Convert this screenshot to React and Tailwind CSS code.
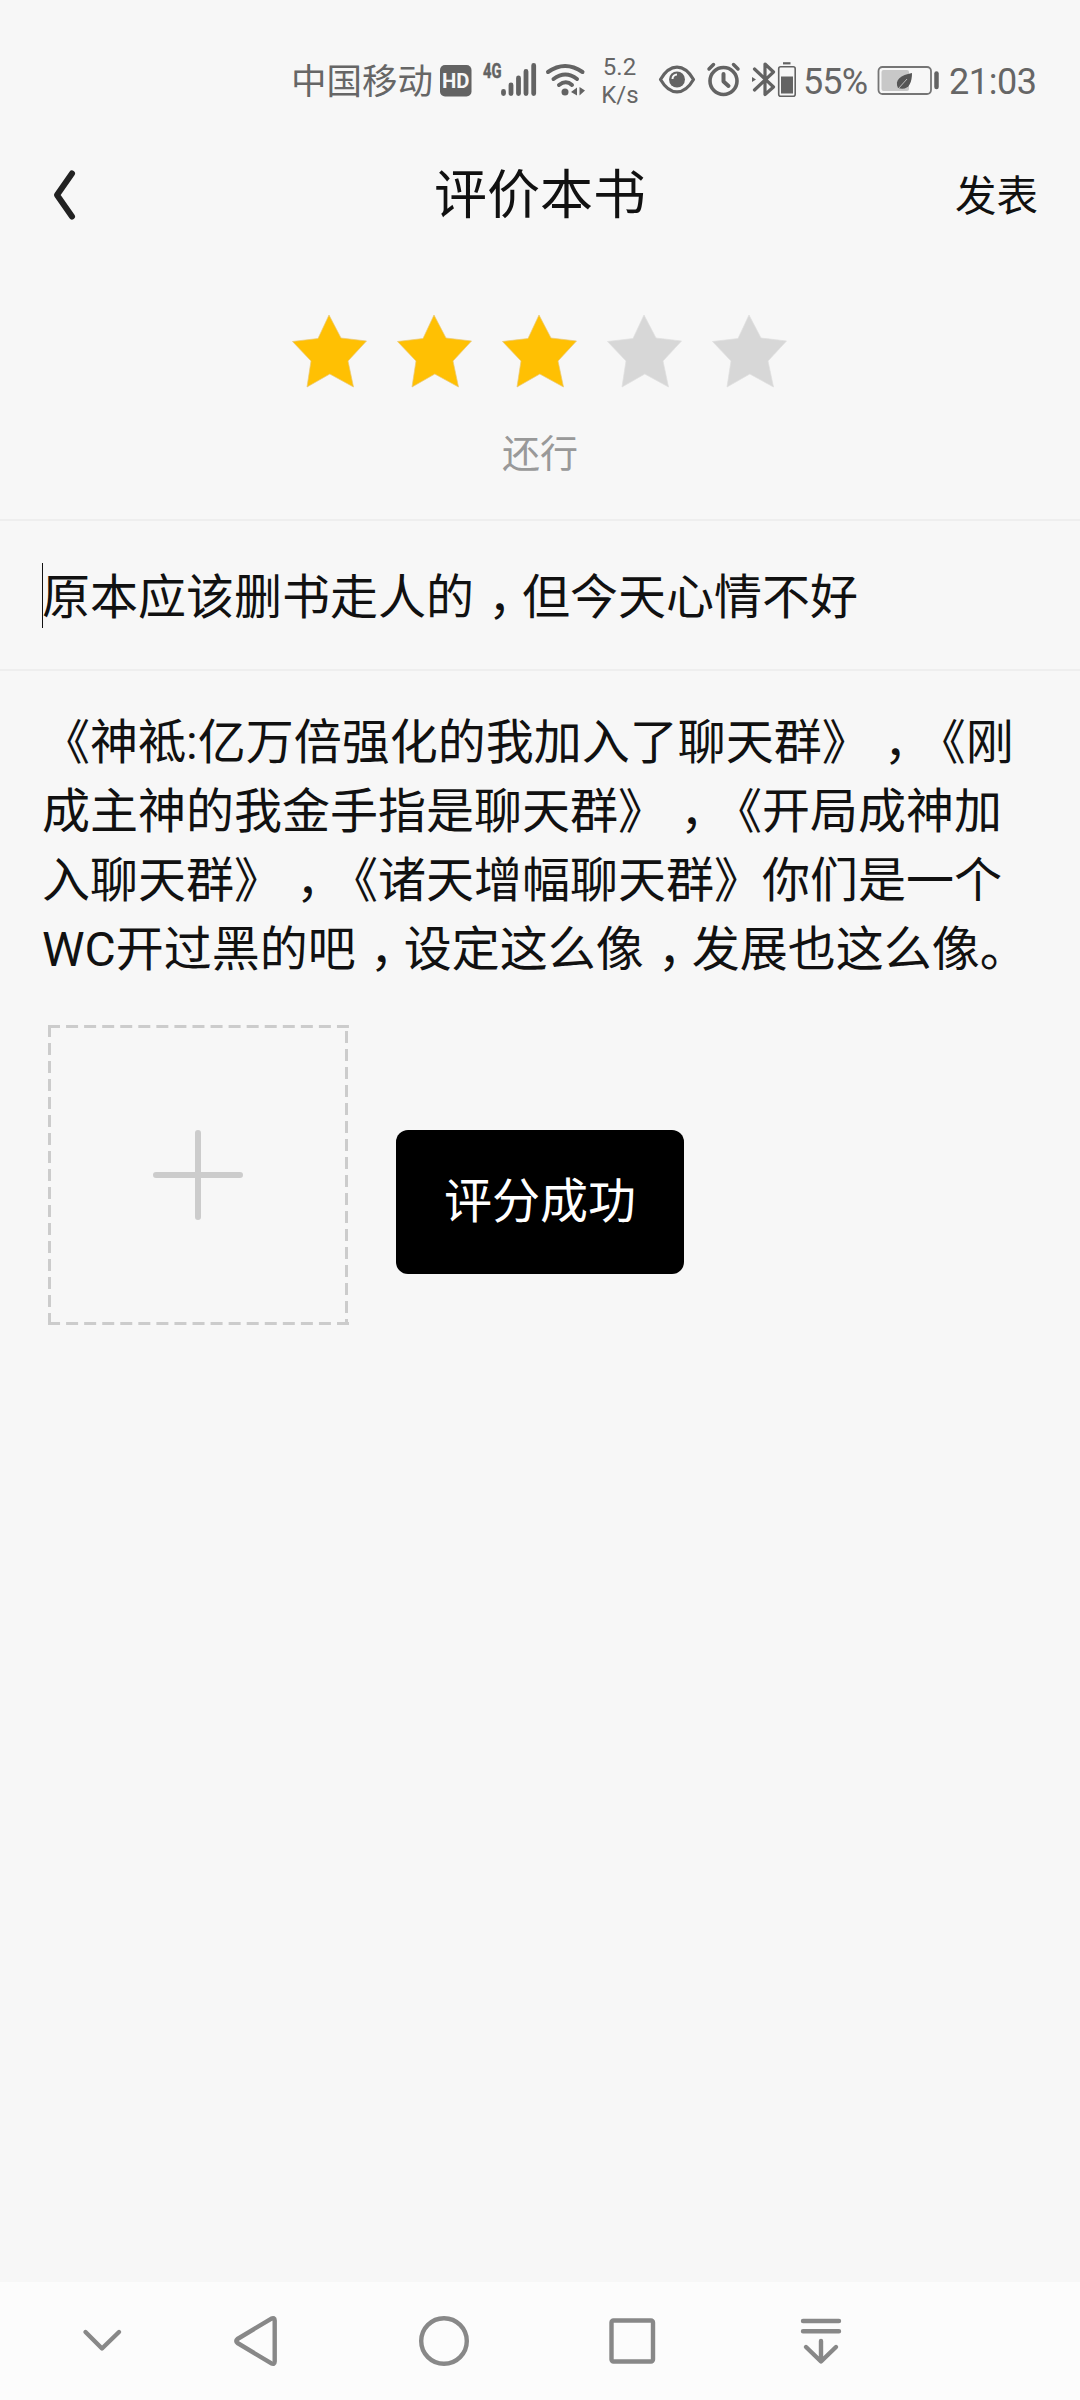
function Star({ on }) {
  return (
    <svg width="75" height="75" viewBox="0 0 75 75" className="block">
      <path d="M37 1L49 24L74.500 27L56 47L61.500 73L37.800 60L15 73L19 47L0.500 27.500L26 24.500Z" fill={on ? "#ffc003" : "#d7d7d7"} stroke={on ? "#e9c977" : "#e0e0e0"} strokeWidth="0.7" />
    </svg>
  );
}

function Comma() {
  return <span className="inline-block w-[48px] pl-[14px] [font-feature-settings:'halt']">，</span>;
}

function Line({ children }) {
  return <div className="h-[69px] whitespace-nowrap">{children}</div>;
}

function StatusBar() {
  return (
    <div className="flex h-[136px] shrink-0 pt-[54px] text-[#666666]">
      <div className="ml-[291px] h-[52px] w-[143px] whitespace-nowrap pt-[2px] text-[35.500px] leading-[52px]">中国移动</div>
      <svg width="646" height="56" viewBox="434 52 646 56" className="-mt-[2px] shrink-0 overflow-visible">
        <rect x="440" y="65" width="31.500" height="31.500" rx="5" fill="#636363" />
        <text x="442" y="88" fontSize="21" fontWeight="700" fill="#f7f7f7" textLength="27.500" lengthAdjust="spacingAndGlyphs">HD</text>
        <text x="483" y="77.500" fontSize="20" fontWeight="700" fill="#636363" stroke="#636363" strokeWidth="0.500" textLength="18.500" lengthAdjust="spacingAndGlyphs">4G</text>
        <path d="M503.500 91.500V93.500M511 85V93.500M518.500 78V93.500M526 71.500V93.500M533.700 65.500V93.500" stroke="#636363" strokeWidth="4.800" strokeLinecap="round" />
        <path d="M548 72Q565 60 582.500 72M553.500 79Q565.500 70 577 79M559 85Q566 79.500 572 85" fill="none" stroke="#636363" strokeWidth="4" strokeLinecap="round" />
        <circle cx="565" cy="92" r="3.500" fill="#636363" />
        <path d="M577 87.500V95.500L571 92ZM579.500 87V95.500L585 90.500Z" fill="#636363" />
        <text x="619.500" y="75" fontSize="24" textAnchor="middle" fill="#666">5.2</text>
        <text x="620" y="103" fontSize="24" textAnchor="middle" fill="#666">K/s</text>
        <path d="M660.500 79.500C670 63 684 63 693.500 79.500C684 96 670 96 660.500 79.500Z" fill="none" stroke="#636363" strokeWidth="3.200" strokeLinejoin="round" />
        <circle cx="677" cy="79.500" r="8" fill="#636363" />
        <path d="M672.500 79A4.500 4.500 0 0 1 677 74.500" fill="none" stroke="#f7f7f7" strokeWidth="2" />
        <circle cx="723.500" cy="81" r="13.500" fill="none" stroke="#636363" strokeWidth="3.600" />
        <path d="M723.500 74V81.500L728.500 86" fill="none" stroke="#636363" strokeWidth="4" strokeLinecap="round" strokeLinejoin="round" />
        <path d="M709 69L713.500 64.500M738 69L733.500 64.500" stroke="#636363" strokeWidth="3.500" strokeLinecap="round" />
        <path d="M754.500 69L773.500 87L765 94.500V64L773.500 72L754.500 90" fill="none" stroke="#636363" strokeWidth="3.200" strokeLinejoin="round" strokeLinecap="round" />
        <path d="M752 77V82L756 79.500Z" fill="#636363" />
        <rect x="778.700" y="66.700" width="16.500" height="29.500" rx="2" fill="none" stroke="#636363" strokeWidth="1.600" />
        <path d="M783 63.300H790.500" stroke="#636363" strokeWidth="2.200" />
        <rect x="781" y="76.500" width="12" height="17" fill="#636363" />
        <text x="803" y="94" fontSize="36" fill="#666" textLength="65">55%</text>
        <rect x="878.500" y="67" width="52.500" height="27" rx="4" fill="none" stroke="#757575" strokeWidth="1.800" />
        <rect x="881.500" y="70" width="27.500" height="21" rx="2" fill="#c8c8c8" />
        <path d="M898 88C894 80 901 75 912 73C912 84 908 91 898 88Z" fill="#555" />
        <path d="M898 89L907 79" stroke="#c8c8c8" strokeWidth="0.900" />
        <path d="M936.500 73.500V87" stroke="#636363" strokeWidth="4.500" strokeLinecap="round" />
        <text x="949" y="94" fontSize="36" fill="#666" textLength="88">21:03</text>
      </svg>
    </div>
  );
}

function NavBar() {
  return (
    <div className="h-[118px] shrink-0 bg-[#fcfcfc]">
      <svg width="1080" height="118" viewBox="0 2282 1080 118" fill="none" stroke="#888888" strokeWidth="4.400" strokeLinecap="round" strokeLinejoin="round">
        <path d="M85.500 2332L102 2348.500L119 2332" />
        <path d="M271 2318.800Q274.700 2317 274.700 2320.500V2361.500Q274.700 2365 271 2363.200L237.500 2343Q235 2341 237.500 2339Z" />
        <circle cx="444" cy="2341" r="22.800" />
        <rect x="611.500" y="2320.500" width="41.500" height="41" rx="2" />
        <path d="M803 2321H839M803 2331.300H839M821 2341V2361M806 2347L821 2361.500L836 2347" />
      </svg>
    </div>
  );
}

export default function App() {
  return (
    <div lang="zh-CN" className="flex h-[2400px] w-[1080px] flex-col overflow-hidden bg-[#f7f7f7] font-[Roboto,'Noto_Sans_CJK_SC',sans-serif] text-[#111111] [text-spacing-trim:space-all]">
      <StatusBar />
      <header className="grid h-[120px] shrink-0 grid-cols-3 items-center px-[42px]">
        <svg width="40" height="60" viewBox="0 0 40 60" className="ml-[4px]" fill="none" stroke="#222" strokeWidth="6" strokeLinecap="round" strokeLinejoin="round">
          <path d="M26 7.500L11 29L26 50.500" />
        </svg>
        <h1 className="text-center text-[53px] leading-[78px]">评价本书</h1>
        <div className="pt-[2px] text-right text-[41.500px] leading-[60px]">发表</div>
      </header>
      <section className="flex h-[265px] shrink-0 flex-col items-center border-b-2 border-[#eeeeee] pt-[58px]">
        <div className="-ml-[2px] flex gap-[30px]">
          {[true, true, true, false, false].map((on, i) => <Star key={i} on={on} />)}
        </div>
        <p className="mt-[37px] text-[38px] leading-[56px] text-[#999999]">还行</p>
      </section>
      <div className="flex h-[150px] shrink-0 items-center border-b-2 border-[#eeeeee] pl-[42px] text-[48px] leading-[69px]">
        <i className="h-[65px] w-px bg-[#111111]" />
        <span className="-ml-px whitespace-nowrap pt-[5px]">原本应该删书走人的<Comma />但今天心情不好</span>
      </div>
      <div className="mt-[37px] h-[276px] shrink-0 pl-[42px] text-[48px] leading-[69px]">
        <Line>《神袛:亿万倍强化的我加入了聊天群》<Comma />《刚</Line>
        <Line>成主神的我金手指是聊天群》<Comma />《开局成神加</Line>
        <Line>入聊天群》<Comma />《诸天增幅聊天群》你们是一个</Line>
        <Line>WC开过黑的吧<Comma />设定这么像<Comma />发展也这么像。</Line>
      </div>
      <div className="mt-[41px] flex h-[302px] shrink-0 pl-[48px]">
        <svg width="301" height="301" viewBox="0 0 301 301" fill="none" stroke="#cccccc">
          <path d="M0 1.500H301M301 298.500H0" strokeWidth="3" strokeDasharray="12 6.060" />
          <path d="M1.500 0V300M298.500 6V300" strokeWidth="3" strokeDasharray="12 6" />
          <path d="M150 108V192M108 150H192" strokeWidth="6" strokeLinecap="round" />
        </svg>
        <div className="mt-[105px] ml-[47px] flex h-[144px] w-[288px] items-center justify-center rounded-[12px] bg-black text-[48px] text-white">评分成功</div>
      </div>
      <div className="grow" />
      <NavBar />
    </div>
  );
}
